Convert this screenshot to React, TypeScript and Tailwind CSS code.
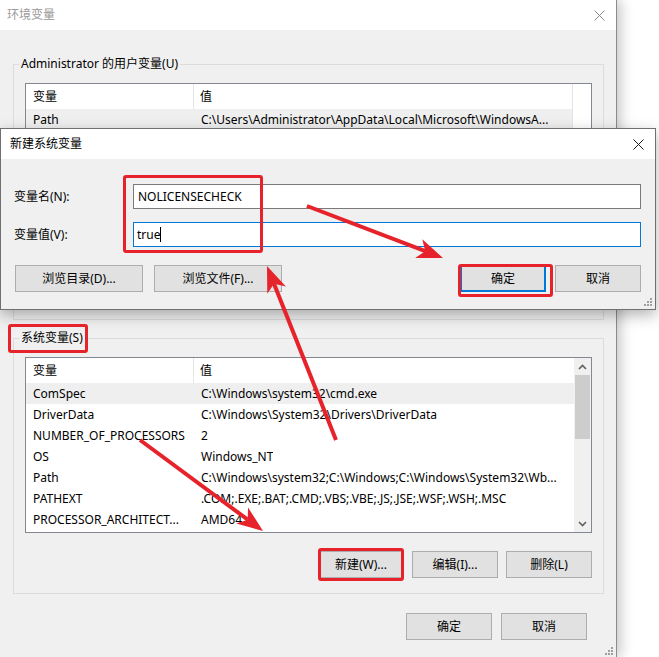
import React from "react";

const sysVars: [string, string][] = [
  ["ComSpec", "C:\\Windows\\system32\\cmd.exe"],
  ["DriverData", "C:\\Windows\\System32\\Drivers\\DriverData"],
  ["NUMBER_OF_PROCESSORS", "2"],
  ["OS", "Windows_NT"],
  ["Path", "C:\\Windows\\system32;C:\\Windows;C:\\Windows\\System32\\Wb..."],
  ["PATHEXT", ".COM;.EXE;.BAT;.CMD;.VBS;.VBE;.JS;.JSE;.WSF;.WSH;.MSC"],
  ["PROCESSOR_ARCHITECT...", "AMD64"],
];

// only the first row shows above the dialog
const userVars: [string, string][] = [
  ["Path", "C:\\Users\\Administrator\\AppData\\Local\\Microsoft\\WindowsA..."],
];

const CloseIcon = ({ color }: { color: string }) => (
  <svg width="11" height="11" viewBox="0 0 11 11">
    <path d="M0.5 0.5 L10.5 10.5 M10.5 0.5 L0.5 10.5" stroke={color} strokeWidth="1" />
  </svg>
);

const Grip = () => (
  <svg width="8" height="8" viewBox="0 0 8 8">
    <rect x="6" y="0" width="2" height="2" fill="#a0a0a0" />
    <rect x="3" y="3" width="2" height="2" fill="#a0a0a0" />
    <rect x="6" y="3" width="2" height="2" fill="#a0a0a0" />
    <rect x="0" y="6" width="2" height="2" fill="#a0a0a0" />
    <rect x="3" y="6" width="2" height="2" fill="#a0a0a0" />
    <rect x="6" y="6" width="2" height="2" fill="#a0a0a0" />
  </svg>
);

const Chevron = ({ up }: { up: boolean }) => (
  <svg width="9" height="6" viewBox="0 0 9 6">
    <path d={up ? "M1 5 L4.5 1.5 L8 5" : "M1 1 L4.5 4.5 L8 1"} stroke="#606060" strokeWidth="1.6" fill="none" />
  </svg>
);

const Button = ({ label, w = "w-[86px]", isDefault = false }: { label: string; w?: string; isDefault?: boolean }) => (
  <div
    className={`${w} h-[27px] flex items-center justify-center bg-[#e1e1e1] text-[12px] text-black ${
      isDefault ? "border-2 border-[#0078d7]" : "border border-[#adadad]"
    }`}
  >
    {label}
  </div>
);

const VarList = ({ rows, scrollbar }: { rows: [string, string][]; scrollbar: boolean }) => (
  <div className="h-[176px] flex border border-[#828790] bg-white overflow-hidden">
    <div className="flex-1 flex flex-col">
      <div className="h-[25px] flex items-center text-[12px]">
        <div className="w-[168px] h-full flex items-center pl-[7px] border-r border-[#e5e5e5]">变量</div>
        <div className="pl-[6px]">值</div>
      </div>
      {rows.map(([name, value], i) => (
        <div key={name} className={`h-[21px] flex items-center text-[12px] ${i === 0 ? "bg-[#efefef]" : ""}`}>
          <div className="w-[168px] pl-[7px] whitespace-nowrap overflow-hidden">{name}</div>
          <div className="pl-[7px] whitespace-nowrap overflow-hidden">{value}</div>
        </div>
      ))}
    </div>
    {scrollbar ? (
      <div className="w-[17px] bg-[#f0f0f0] flex flex-col">
        <div className="h-[17px] flex items-center justify-center">
          <Chevron up />
        </div>
        <div className="h-[64px] mx-[1px] bg-[#cdcdcd]" />
        <div className="flex-1" />
        <div className="h-[17px] flex items-center justify-center">
          <Chevron up={false} />
        </div>
      </div>
    ) : (
      <div className="w-[19px] border-l border-[#e5e5e5]" />
    )}
  </div>
);

const Arrow = ({ x1, y1, x2, y2 }: { x1: number; y1: number; x2: number; y2: number }) => {
  const dx = x2 - x1;
  const dy = y2 - y1;
  const len = Math.hypot(dx, dy);
  const ux = dx / len;
  const uy = dy / len;
  const px = -uy;
  const py = ux;
  const head = 26;
  const half = 10;
  const notch = 7;
  const bx = x2 - ux * head;
  const by = y2 - uy * head;
  const nx = x2 - ux * (head - notch);
  const ny = y2 - uy * (head - notch);
  const pts = `${x2},${y2} ${bx + px * half},${by + py * half} ${nx},${ny} ${bx - px * half},${by - py * half}`;
  return (
    <g>
      <line x1={x1} y1={y1} x2={nx} y2={ny} stroke="#e6222b" strokeWidth="4" />
      <polygon points={pts} fill="#e6222b" />
    </g>
  );
};

const RedBox = ({ cls }: { cls: string }) => (
  <div className={`absolute border-[3px] border-[#e6222b] rounded-[3px] ${cls}`} />
);

export default function App() {
  return (
    <div className="relative w-[659px] h-[657px] overflow-hidden bg-white text-black font-['Noto_Sans','Noto_Sans_CJK_SC',sans-serif]">
      {/* 环境变量 window */}
      <div className="w-[617px] h-full flex flex-col border-r border-[#8c8c8c] shadow-[4px_0_12px_rgba(0,0,0,0.22)]">
        <div className="h-[30px] shrink-0 bg-white flex items-center justify-between pl-[7px] pr-[11px]">
          <span className="text-[12px] text-[#9a9a9a]">环境变量</span>
          <CloseIcon color="#8a8a8a" />
        </div>
        <div className="relative flex-1 bg-[#f0f0f0] pl-[13px] pr-[12px] pt-[26px]">
          <fieldset className="h-[264px] border border-[#dcdcdc]">
            <legend className="ml-[5px] px-[2px] text-[12px] leading-[16px]">Administrator 的用户变量(U)</legend>
            <div className="mt-[11px] px-[11px]">
              <VarList rows={userVars} scrollbar={false} />
            </div>
          </fieldset>

          <fieldset className="mt-[10px] h-[264px] border border-[#dcdcdc]">
            <legend className="ml-[5px] px-[2px] text-[12px] leading-[16px]">系统变量(S)</legend>
            <div className="mt-[11px] px-[11px]">
              <VarList rows={sysVars} scrollbar />
            </div>
            <div className="mt-[18px] px-[11px] flex justify-end gap-[8px]">
              <Button label="新建(W)..." />
              <Button label="编辑(I)..." />
              <Button label="删除(L)" />
            </div>
          </fieldset>

          <div className="mt-[19px] flex justify-end gap-[9px] pr-[17px]">
            <Button label="确定" />
            <Button label="取消" />
          </div>

          <div className="absolute right-[3px] bottom-[2px]">
            <Grip />
          </div>
        </div>
      </div>

      {/* 新建系统变量 dialog */}
      <div className="absolute left-0 top-[128px] w-[656px] h-[182px] flex flex-col border border-[#707070] bg-[#f0f0f0] shadow-[0_5px_14px_rgba(0,0,0,0.3)]">
        <div className="h-[30px] shrink-0 bg-white flex items-center justify-between pl-[9px] pr-[11px]">
          <span className="text-[12px]">新建系统变量</span>
          <CloseIcon color="#1a1a1a" />
        </div>
        <div className="relative flex-1 flex flex-col pl-[13px] pr-[14px] pt-[25px]">
          <div className="flex items-center h-[25px]">
            <div className="w-[119px] text-[12px]">变量名(N):</div>
            <div className="flex-1 h-full bg-white border border-[#7a7a7a] flex items-center pl-[4px] text-[12px]">
              NOLICENSECHECK
            </div>
          </div>
          <div className="flex items-center h-[25px] mt-[13px]">
            <div className="w-[119px] text-[12px]">变量值(V):</div>
            <div className="flex-1 h-full bg-white border border-[#0078d7] flex items-center pl-[3px] text-[12px]">
              true<span className="inline-block w-[1px] h-[15px] bg-black" />
            </div>
          </div>
          <div className="flex items-center mt-[18px] pl-[1px]">
            <Button label="浏览目录(D)..." w="w-[128px]" />
            <div className="ml-[11px]">
              <Button label="浏览文件(F)..." w="w-[128px]" />
            </div>
            <div className="flex-1" />
            <Button label="确定" isDefault />
            <div className="ml-[9px]">
              <Button label="取消" />
            </div>
          </div>
          <div className="absolute right-[3px] bottom-[3px]">
            <Grip />
          </div>
        </div>
      </div>

      {/* red annotations */}
      <RedBox cls="left-[123px] top-[175px] w-[140px] h-[78px]" />
      <RedBox cls="left-[458px] top-[264px] w-[95px] h-[33px]" />
      <RedBox cls="left-[8px] top-[324px] w-[80px] h-[29px]" />
      <RedBox cls="left-[318px] top-[548px] w-[86px] h-[33px]" />

      <svg className="absolute inset-0 pointer-events-none" width="659" height="657">
        <Arrow x1={307} y1={206} x2={443} y2={258} />
        <Arrow x1={336} y1={440} x2={267} y2={266} />
        <Arrow x1={140} y1={440} x2={263} y2={531} />
      </svg>
    </div>
  );
}
